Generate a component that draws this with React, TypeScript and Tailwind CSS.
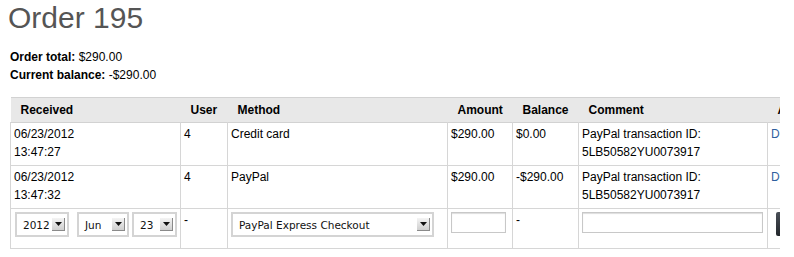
import React from 'react'

function FakeSelect({ value, width }: { value: string; width: string }) {
  return (
    <div
      className={`flex h-[25px] items-center justify-between border-2 border-[#d4d4d4] bg-white pl-[6px] pr-[2px] ${width}`}
    >
      <span className="font-['DejaVu_Sans',sans-serif] text-[10.5px] text-[#111]">{value}</span>
      <span className="flex h-[13px] w-[13px] shrink-0 items-center justify-center border-b border-r border-[#8a8a8a] bg-gradient-to-b from-[#f4f4f4] to-[#cfcfcf]">
        <svg width="7" height="4" viewBox="0 0 7 4">
          <path d="M0 0h7L3.5 4z" fill="#111" />
        </svg>
      </span>
    </div>
  )
}

const rows = [
  { date: '06/23/2012', time: '13:47:27', user: '4', method: 'Credit card', amount: '$290.00', balance: '$0.00' },
  { date: '06/23/2012', time: '13:47:32', user: '4', method: 'PayPal', amount: '$290.00', balance: '-$290.00' },
]

export default function App() {
  const td = 'border-r border-b border-[#d6d6d6] px-[3px] pt-[2px] pb-[4px] align-top leading-[18px]'
  const th = 'px-[10px] text-left font-bold'

  return (
    <div className="h-[257px] w-[794px] overflow-hidden bg-white font-['Liberation_Sans',Arial,sans-serif] text-[12px] text-black">
      <h1 className="pl-[8px] pt-[0px] text-[30px] leading-[36px] text-[#555]">Order 195</h1>
      <div className="mt-[12px] pl-[10px] leading-[18px]">
        <div>
          <span className="font-bold">Order total:</span> $290.00
        </div>
        <div>
          <span className="font-bold">Current balance:</span> -$290.00
        </div>
      </div>

      <div className="ml-[10px] mt-[13px] w-[770px] overflow-hidden">
        <table className="w-[840px] table-fixed border-collapse">
          <colgroup>
            <col className="w-[170px]" />
            <col className="w-[47px]" />
            <col className="w-[220px]" />
            <col className="w-[65px]" />
            <col className="w-[66px]" />
            <col className="w-[189px]" />
            <col className="w-[83px]" />
          </colgroup>
          <thead>
            <tr className="h-[25px] border-y border-[#d2d2d2] bg-[#e8e8e8]">
              <th className={th}>Received</th>
              <th className={th}>User</th>
              <th className={th}>Method</th>
              <th className={th}>Amount</th>
              <th className={th}>Balance</th>
              <th className={th}>Comment</th>
              <th className={th}>Actions</th>
            </tr>
          </thead>
          <tbody>
            {rows.map((r, i) => (
              <tr key={i} className="h-[43px]">
                <td className={`${td} border-l`}>
                  {r.date}
                  <br />
                  {r.time}
                </td>
                <td className={td}>{r.user}</td>
                <td className={td}>{r.method}</td>
                <td className={td}>{r.amount}</td>
                <td className={td}>{r.balance}</td>
                <td className={td}>
                  PayPal transaction ID:
                  <br />
                  5LB50582YU0073917
                </td>
                <td className={`${td} text-[#2f5f9e]`}>Delete</td>
              </tr>
            ))}
            <tr className="h-[40px]">
              <td className={`${td} border-l pt-[3px]`}>
                <div className="flex pl-[1px]">
                  <FakeSelect value="2012" width="w-[54px]" />
                  <div className="ml-[8px]">
                    <FakeSelect value="Jun" width="w-[52px]" />
                  </div>
                  <div className="ml-[3px]">
                    <FakeSelect value="23" width="w-[45px]" />
                  </div>
                </div>
              </td>
              <td className={td}>-</td>
              <td className={`${td} pt-[3px]`}>
                <FakeSelect value="PayPal Express Checkout" width="w-[203px]" />
              </td>
              <td className={`${td} pt-[3px]`}>
                <div className="h-[21px] w-[55px] border border-[#c8c8c8] shadow-[inset_0_1px_1px_#ddd]" />
              </td>
              <td className={td}>-</td>
              <td className={`${td} pt-[3px]`}>
                <div className="h-[21px] w-[181px] border border-[#c8c8c8] shadow-[inset_0_1px_1px_#ddd]" />
              </td>
              <td className={`${td} pt-[3px]`}>
                <div className="ml-[5px] h-[24px] w-[40px] rounded-[2px] bg-gradient-to-b from-[#4a5058] to-[#23272c]" />
              </td>
            </tr>
          </tbody>
        </table>
      </div>
    </div>
  )
}
